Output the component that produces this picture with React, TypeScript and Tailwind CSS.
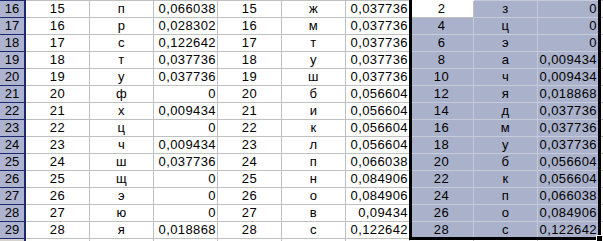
import React from 'react';

type Row = [number, string, string, string, string, string, string, string, string, string];

// row no | B | C | D | E | F | G | H | I | J
const rows: Row[] = [
  [16, '15', 'п', '0,066038', '15', 'ж', '0,037736', '2', 'з', '0'],
  [17, '16', 'р', '0,028302', '16', 'м', '0,037736', '4', 'ц', '0'],
  [18, '17', 'с', '0,122642', '17', 'т', '0,037736', '6', 'э', '0'],
  [19, '18', 'т', '0,037736', '18', 'у', '0,037736', '8', 'а', '0,009434'],
  [20, '19', 'у', '0,037736', '19', 'ш', '0,037736', '10', 'ч', '0,009434'],
  [21, '20', 'ф', '0', '20', 'б', '0,056604', '12', 'я', '0,018868'],
  [22, '21', 'х', '0,009434', '21', 'и', '0,056604', '14', 'д', '0,037736'],
  [23, '22', 'ц', '0', '22', 'к', '0,056604', '16', 'м', '0,037736'],
  [24, '23', 'ч', '0,009434', '23', 'л', '0,056604', '18', 'у', '0,037736'],
  [25, '24', 'ш', '0,037736', '24', 'п', '0,066038', '20', 'б', '0,056604'],
  [26, '25', 'щ', '0', '25', 'н', '0,084906', '22', 'к', '0,056604'],
  [27, '26', 'э', '0', '26', 'о', '0,084906', '24', 'п', '0,066038'],
  [28, '27', 'ю', '0', '27', 'в', '0,09434', '26', 'о', '0,084906'],
  [29, '28', 'я', '0,018868', '28', 'с', '0,122642', '28', 'с', '0,122642'],
];

const plain = 'h-[17px] w-[64px] shrink-0 overflow-hidden whitespace-nowrap border-r border-b border-[#c0c0c0] bg-white leading-[16px] tracking-[0.4px]';
const sel = 'h-[17px] shrink-0 overflow-hidden whitespace-nowrap border-r border-b border-[#c7cad8] bg-[#aab1ca] leading-[16px] tracking-[0.4px]';

function Header({ n, active = true }: { n?: number; active?: boolean }) {
  return (
    <div
      className={`h-[17px] w-[26px] shrink-0 border-r-2 border-b border-[#1d2a6b] text-center leading-[16px] ${
        active ? 'bg-[#aeb3cf]' : 'bg-[#d6d3ce]'
      }`}
    >
      {n}
    </div>
  );
}

export default function App() {
  return (
    <div className="relative h-[241px] w-[603px] overflow-hidden bg-white font-['Liberation_Sans',Arial,sans-serif] text-[13px] text-black">
      {/* bottom gridline of row 15 */}
      <div className="flex h-px">
        <div className="w-[26px] shrink-0 bg-[#1d2a6b]" />
        <div className="w-[384px] shrink-0 bg-[#c0c0c0]" />
        <div className="w-[64px] shrink-0 bg-white" />
        <div className="flex-1 bg-[#c7cad8]" />
      </div>

      {rows.map((r, i) => (
        <div key={r[0]} className="flex">
          <Header n={r[0]} />
          <div className={`${plain} text-center`}>{r[1]}</div>
          <div className={`${plain} text-center`}>{r[2]}</div>
          <div className={`${plain} pr-[1px] text-right`}>{r[3]}</div>
          <div className={`${plain} text-center`}>{r[4]}</div>
          <div className={`${plain} text-center`}>{r[5]}</div>
          <div className={`${plain} pr-[1px] text-right`}>{r[6]}</div>
          {i === 0 ? (
            <div className={`${plain} text-center`}>{r[7]}</div>
          ) : (
            <div className={`${sel} w-[64px] text-center`}>{r[7]}</div>
          )}
          <div className={`${sel} w-[64px] text-center`}>{r[8]}</div>
          <div className={`${sel} w-[62px] pr-[2px] text-right`}>{r[9]}</div>
          <div className={`${plain}`} />
        </div>
      ))}

      {/* row 30, only a sliver visible */}
      <div className="flex">
        <Header active={false} />
        {Array.from({ length: 10 }).map((_, k) => (
          <div key={k} className={plain} />
        ))}
      </div>

      {/* selection outline H16:J29 */}
      <div className="absolute left-[409px] top-[-3px] h-[243px] w-[192px] border-[3px] border-black" />
      {/* fill handle */}
      <div className="absolute left-[596px] top-[235px] h-[7px] w-[7px] border border-white bg-black" />
    </div>
  );
}
